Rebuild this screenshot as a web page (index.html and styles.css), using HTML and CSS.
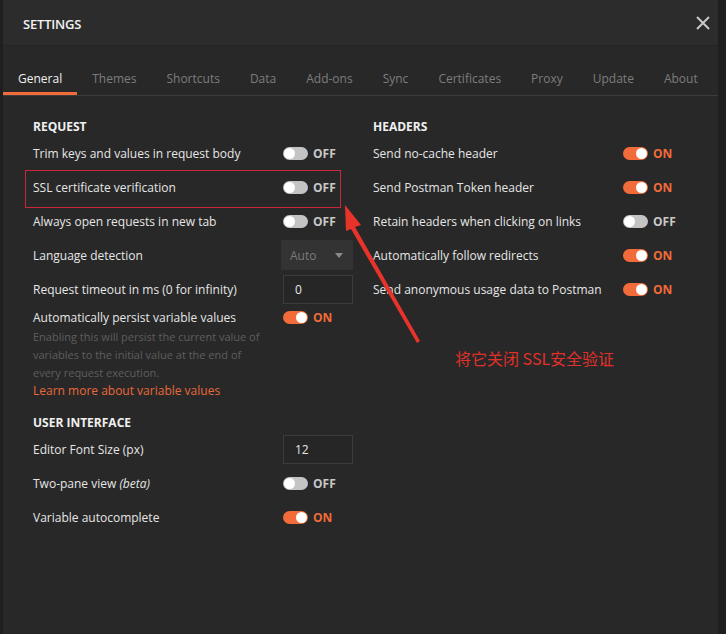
FILE: index.html
```html
<!DOCTYPE html>
<html>
<head>
<meta charset="utf-8">
<link rel="stylesheet" href="styles.css">
</head>
<body>
<div class="modal">
  <div class="header">
    <span class="title">SETTINGS</span>
    <svg class="close" width="14" height="14" viewBox="0 0 14 14"><path d="M1 1L13 13M13 1L1 13" stroke="#c8c8c8" stroke-width="2" fill="none"/></svg>
  </div>
  <div class="tabs">
    <span class="tab active">General</span>
    <span class="tab">Themes</span>
    <span class="tab">Shortcuts</span>
    <span class="tab">Data</span>
    <span class="tab">Add-ons</span>
    <span class="tab">Sync</span>
    <span class="tab">Certificates</span>
    <span class="tab">Proxy</span>
    <span class="tab">Update</span>
    <span class="tab">About</span>
  </div>
  <div class="content">
    <div class="col">
      <div class="heading">REQUEST</div>
      <div class="row"><span class="label">Trim keys and values in request body</span><span class="switch off"><i class="track"></i><b>OFF</b></span></div>
      <div class="row"><span class="label">SSL certificate verification</span><span class="switch off"><i class="track"></i><b>OFF</b></span></div>
      <div class="row"><span class="label">Always open requests in new tab</span><span class="switch off"><i class="track"></i><b>OFF</b></span></div>
      <div class="row"><span class="label">Language detection</span><span class="select">Auto<i class="caret"></i></span></div>
      <div class="row"><span class="label">Request timeout in ms (0 for infinity)</span><span class="input">0</span></div>
      <div class="row short"><span class="label">Automatically persist variable values</span><span class="switch on"><i class="track"></i><b>ON</b></span></div>
      <div class="desc">Enabling this will persist the current value of variables to the initial value at the end of every request execution.</div>
      <div class="link">Learn more about variable values</div>
      <div class="heading ui">USER INTERFACE</div>
      <div class="row"><span class="label">Editor Font Size (px)</span><span class="input">12</span></div>
      <div class="row"><span class="label">Two-pane view <em>(beta)</em></span><span class="switch off"><i class="track"></i><b>OFF</b></span></div>
      <div class="row"><span class="label">Variable autocomplete</span><span class="switch on"><i class="track"></i><b>ON</b></span></div>
    </div>
    <div class="col">
      <div class="heading">HEADERS</div>
      <div class="row"><span class="label">Send no-cache header</span><span class="switch on"><i class="track"></i><b>ON</b></span></div>
      <div class="row"><span class="label">Send Postman Token header</span><span class="switch on"><i class="track"></i><b>ON</b></span></div>
      <div class="row"><span class="label">Retain headers when clicking on links</span><span class="switch off"><i class="track"></i><b>OFF</b></span></div>
      <div class="row"><span class="label">Automatically follow redirects</span><span class="switch on"><i class="track"></i><b>ON</b></span></div>
      <div class="row"><span class="label">Send anonymous usage data to Postman</span><span class="switch on"><i class="track"></i><b>ON</b></span></div>
    </div>
  </div>
  <div class="markbox"></div>
  <svg class="arrow" width="90" height="150" viewBox="0 0 90 150">
    <polygon points="0,0 16,20 10,22 75,136 72,138 6,24 1,26" fill="#e8332a"/>
  </svg>
  <div class="note">将它关闭 SSL安全验证</div>
</div>
</body>
</html>
```
FILE: styles.css
```css
html, body {
  margin: 0;
  padding: 0;
}
body {
  background: #1f1f1f;
  width: 726px;
  height: 634px;
  overflow: hidden;
  font-family: "Open Sans", "Noto Sans", sans-serif;
}
.modal {
  position: relative;
  margin-left: 3px;
  width: 715px;
  height: 634px;
  background: #282828;
  color: #e6e6e6;
}
.header {
  height: 46px;
  background: #2c2c2c;
  border-bottom: 1px solid #252525;
  display: flex;
  align-items: center;
  justify-content: space-between;
  padding: 0 8px 0 20px;
  box-sizing: border-box;
}
.title {
  font-size: 13px;
  color: #f2f2f2;
  font-weight: 600;
  letter-spacing: -0.2px;
  margin-top: 2px;
}
.close {
  margin-top: 1px;
}
.tabs {
  height: 50px;
  background: #282828;
  border-bottom: 1px solid #3c3c3c;
  display: flex;
  align-items: flex-end;
  box-sizing: border-box;
}
.tab {
  font-size: 12px;
  color: #7d7d7d;
  padding: 0 15px 5px;
  height: 17px;
  line-height: 17px;
  white-space: nowrap;
  border-bottom: 3px solid transparent;
}
.tab.active {
  color: #f0f0f0;
  border-bottom-color: #f26b3a;
}
.content {
  display: grid;
  grid-template-columns: 320px 320px;
  column-gap: 20px;
  padding: 20px 0 0 30px;
}
.heading {
  font-size: 12px;
  font-weight: 700;
  color: #f0f0f0;
  height: 18px;
  line-height: 18px;
  padding-top: 2px;
}
.heading.ui {
  margin-top: 12px;
}
.row {
  height: 34px;
  display: flex;
  align-items: center;
  font-size: 12px;
  color: #e6e6e6;
}
.row.short {
  height: 22px;
}
.label {
  width: 250px;
  flex: none;
}
.label em {
  font-style: italic;
}
.switch {
  display: flex;
  align-items: center;
  gap: 5px;
}
.track {
  position: relative;
  display: block;
  width: 25px;
  height: 13px;
  border-radius: 7px;
  background: #c4c4c4;
}
.track::after {
  content: "";
  position: absolute;
  top: 1px;
  left: 1px;
  width: 11px;
  height: 11px;
  border-radius: 50%;
  background: #ffffff;
}
.switch.on .track {
  background: #f26b3a;
}
.switch.on .track::after {
  left: 13px;
}
.switch b {
  font-size: 12px;
  font-weight: 700;
  color: #c8c8c8;
}
.switch.on b {
  color: #f26b3a;
}
.select {
  margin-left: -2px;
  width: 72px;
  height: 30px;
  background: #333333;
  box-sizing: border-box;
  padding-left: 9px;
  display: flex;
  align-items: center;
  color: #7a7a7a;
  font-size: 12px;
  position: relative;
}
.caret {
  position: absolute;
  right: 10px;
  top: 13px;
  width: 0;
  height: 0;
  border-left: 4px solid transparent;
  border-right: 4px solid transparent;
  border-top: 5px solid #8a8a8a;
}
.input {
  width: 70px;
  height: 29px;
  box-sizing: border-box;
  border: 1px solid #3c3c3c;
  background: #262626;
  padding-left: 11px;
  display: flex;
  align-items: center;
  color: #e6e6e6;
  font-size: 12px;
}
.desc {
  width: 232px;
  font-size: 11px;
  line-height: 18px;
  color: #5e5e5e;
}
.link {
  font-size: 12px;
  line-height: 18px;
  color: #e8693a;
}
.markbox {
  position: absolute;
  left: 22px;
  top: 170px;
  width: 314px;
  height: 36px;
  border: 1px solid #c8283a;
}
.arrow {
  position: absolute;
  left: 342px;
  top: 205px;
}
.note {
  position: absolute;
  left: 452px;
  top: 347px;
  font-family: "Noto Sans CJK SC", sans-serif;
  font-size: 16px;
  line-height: 22px;
  color: #e0302a;
  white-space: pre;
}
```
